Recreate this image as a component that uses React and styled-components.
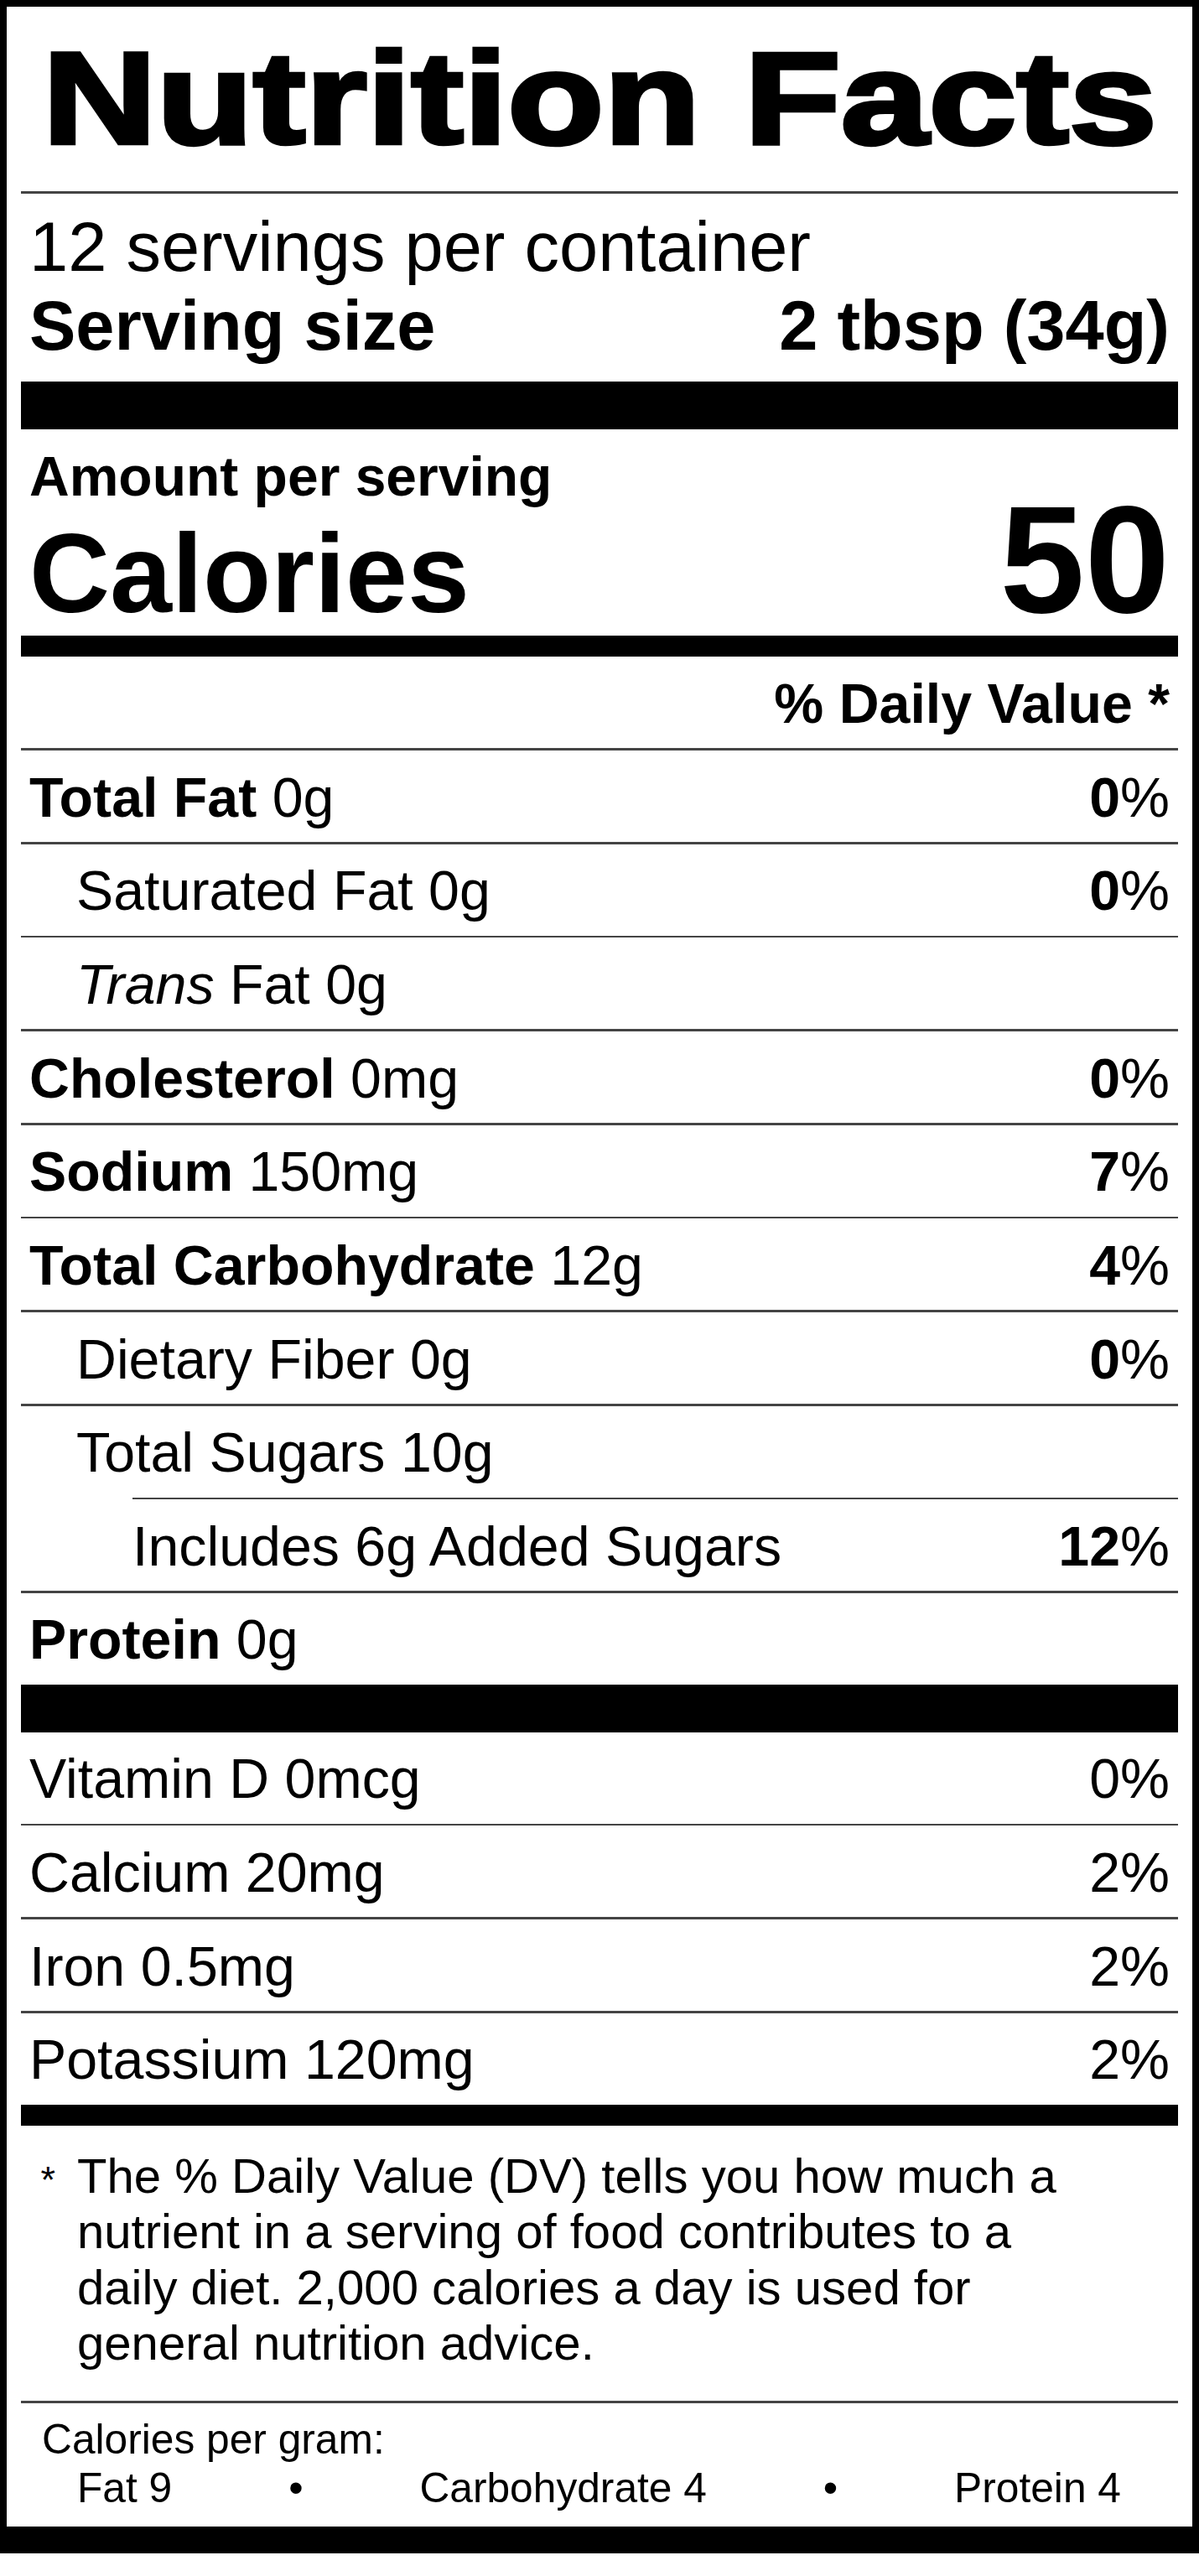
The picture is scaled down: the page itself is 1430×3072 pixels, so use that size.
import React from "react";
import styled, { createGlobalStyle } from "styled-components";

const Global = createGlobalStyle`
  html, body { margin: 0; padding: 0; background: #fff; }
  #root { width: 1430px; }
`;

const Label = styled.section`
  box-sizing: border-box;
  width: 1430px;
  border: 8px solid #000;
  border-bottom-width: 32px;
  padding: 0 17px;
  background: #fff;
  color: #000;
  font-family: "Liberation Sans", Arial, Helvetica, sans-serif;
`;

const Title = styled.h1`
  margin: 0;
  padding: 29px 0 31.3px;
  font-family: "Liberation Sans", Arial, sans-serif;
  font-weight: 700;
  font-size: 155.7px;
  line-height: 160px;
  text-align: center;
  white-space: nowrap;
`;

const TitleText = styled.span`
  display: inline-block;
  -webkit-text-stroke: 4.5px #000;
  transform: scaleX(1.21);
  transform-origin: center;
`;

const Rule = styled.div`
  height: ${(p) => (p.$h ? `${p.$h}px` : "2.7px")};
  background: ${(p) => (p.$h ? "#000" : "#444")};
  margin-left: ${(p) => p.$inset || 0}px;
`;

const Servings = styled.div`
  padding: 17.3px 10px 18.7px;
  font-size: 83px;
  line-height: 94px;
`;

const ServingSize = styled.div`
  display: flex;
  justify-content: space-between;
  font-weight: 700;
`;

const AmountBlock = styled.div`
  padding: 24px 10px 7.5px;
  font-weight: 700;
`;

const AmountLabel = styled.div`
  font-size: 66px;
  line-height: 65px;
`;

const CaloriesRow = styled.div`
  display: flex;
  justify-content: space-between;
  align-items: baseline;
`;

const CaloriesLabel = styled.span`
  font-size: 133px;
  line-height: 133px;
`;

const CaloriesValue = styled.span`
  font-size: 182px;
  line-height: 132px;
`;

const Row = styled.div`
  display: flex;
  justify-content: ${(p) => (p.$end ? "flex-end" : "space-between")};
  align-items: baseline;
  margin-left: ${(p) => p.$inset || 0}px;
  padding: 18.55px 10px 15.67px ${(p) => p.$pad ?? 10}px;
  font-size: 66.3px;
  line-height: 74.75px;
  font-weight: ${(p) => (p.$bold ? 700 : 400)};
`;

const Strong = styled.b`
  font-weight: 700;
`;

const Footnote = styled.div`
  display: flex;
  align-items: baseline;
  padding: 27px 100px 35px 23.5px;
`;

const Star = styled.span`
  flex: 0 0 43.5px;
  font-size: 45px;
  line-height: 66.6px;
`;

const FootText = styled.p`
  margin: 0;
  font-size: 58.1px;
  line-height: 66.6px;
`;

const PerGram = styled.div`
  padding: 14px 0 17px;
  font-size: 49.7px;
  line-height: 58.2px;
`;

const PerGramTitle = styled.div`
  padding-left: 25px;
`;

const PerGramList = styled.div`
  display: flex;
  justify-content: space-between;
  padding: 0 68px 0 67px;
`;

const nutrients = [
  { label: "Total Fat", bold: true, amount: "0g", dv: "0" },
  { label: "Saturated Fat", indent: true, amount: "0g", dv: "0" },
  { label: <><i>Trans</i> Fat</>, indent: true, amount: "0g" },
  { label: "Cholesterol", bold: true, amount: "0mg", dv: "0" },
  { label: "Sodium", bold: true, amount: "150mg", dv: "7" },
  { label: "Total Carbohydrate", bold: true, amount: "12g", dv: "4" },
  { label: "Dietary Fiber", indent: true, amount: "0g", dv: "0" },
  { label: "Total Sugars", indent: true, amount: "10g" },
  { label: "Includes 6g Added Sugars", sub: true, dv: "12" },
  { label: "Protein", bold: true, amount: "0g" },
];

const vitamins = [
  { label: "Vitamin D 0mcg", dv: "0%" },
  { label: "Calcium 20mg", dv: "2%" },
  { label: "Iron 0.5mg", dv: "2%" },
  { label: "Potassium 120mg", dv: "2%" },
];

function NutrientRow({ n }) {
  const pad = n.sub ? 0 : n.indent ? 66 : 10;
  return (
    <Row $pad={pad} $inset={n.sub ? 133 : 0}>
      <span>
        {n.bold ? <Strong>{n.label}</Strong> : n.label}
        {n.amount ? ` ${n.amount}` : ""}
      </span>
      {n.dv !== undefined && (
        <span>
          <Strong>{n.dv}</Strong>%
        </span>
      )}
    </Row>
  );
}

export default function App() {
  return (
    <>
      <Global />
      <Label>
        <Title>
          <TitleText>Nutrition Facts</TitleText>
        </Title>
        <Rule />
        <Servings>
          <div>12 servings per container</div>
          <ServingSize>
            <span>Serving size</span>
            <span>2 tbsp (34g)</span>
          </ServingSize>
        </Servings>
        <Rule $h={57} />
        <AmountBlock>
          <AmountLabel>Amount per serving</AmountLabel>
          <CaloriesRow>
            <CaloriesLabel>Calories</CaloriesLabel>
            <CaloriesValue>50</CaloriesValue>
          </CaloriesRow>
        </AmountBlock>
        <Rule $h={25} />
        <Row $end $bold>
          <span>% Daily Value *</span>
        </Row>
        {nutrients.map((n, i) => (
          <React.Fragment key={i}>
            <Rule $inset={n.sub ? 133 : 0} />
            <NutrientRow n={n} />
          </React.Fragment>
        ))}
        <Rule $h={57} />
        {vitamins.map((v, i) => (
          <React.Fragment key={i}>
            {i > 0 && <Rule />}
            <Row>
              <span>{v.label}</span>
              <span>{v.dv}</span>
            </Row>
          </React.Fragment>
        ))}
        <Rule $h={25} />
        <Footnote>
          <Star>*</Star>
          <FootText>
            The % Daily Value (DV) tells you how much a nutrient in a serving of
            food contributes to a daily diet. 2,000 calories a day is used for
            general nutrition advice.
          </FootText>
        </Footnote>
        <Rule />
        <PerGram>
          <PerGramTitle>Calories per gram:</PerGramTitle>
          <PerGramList>
            <span>Fat 9</span>
            <span>•</span>
            <span>Carbohydrate 4</span>
            <span>•</span>
            <span>Protein 4</span>
          </PerGramList>
        </PerGram>
      </Label>
    </>
  );
}
